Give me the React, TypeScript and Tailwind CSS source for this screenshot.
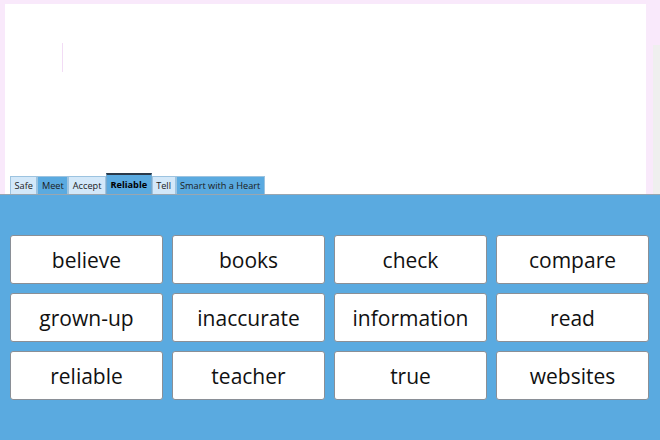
const tabs = [
  { label: "Safe", tone: "light" },
  { label: "Meet", tone: "blue" },
  { label: "Accept", tone: "light" },
  { label: "Reliable", tone: "active" },
  { label: "Tell", tone: "light" },
  { label: "Smart with a Heart", tone: "blue" },
];

const words = [
  "believe",
  "books",
  "check",
  "compare",
  "grown-up",
  "inaccurate",
  "information",
  "read",
  "reliable",
  "teacher",
  "true",
  "websites",
];

export default function App() {
  return (
    <div className="flex h-[440px] w-[660px] flex-col overflow-hidden bg-[#f9e9fb] font-['Open_Sans',sans-serif]">
      {/* Writing area */}
      <div className="flex h-[194px] shrink-0">
        <div className="flex flex-1 flex-col pl-[5px] pt-[4px]">
          <div className="relative flex flex-1 flex-col justify-end bg-white">
            <div className="absolute left-[57px] top-[39px] h-[29px] w-px bg-[#f2dcf5]" />
            <div className="flex items-end pl-[5px] text-[9.2px] leading-none text-[#1a1a1a]">
              {tabs.map((t) => (
                <div
                  key={t.label}
                  className={
                    t.tone === "active"
                      ? "flex h-[21px] items-center border-t-2 border-x border-[#2b3a4a] border-x-[#7aa9cc] bg-[#5aaae0] px-[3.5px] pt-px font-bold text-black"
                      : t.tone === "blue"
                        ? "flex h-[18px] items-center border border-b-0 border-[#9cc3e0] bg-[#5aaae0] px-[3.5px] pt-px"
                        : "flex h-[18px] items-center border border-b-0 border-[#9cc3e0] bg-[#d3e8f9] px-[3.5px] pt-px"
                  }
                >
                  {t.label}
                </div>
              ))}
            </div>
          </div>
        </div>
        <div className="w-[7px] bg-[#f9e9fb]" />
        <div className="flex w-[7px] flex-col">
          <div className="h-[45px] bg-[#f9e9fb]" />
          <div className="flex-1 bg-[#efefef]" />
        </div>
      </div>

      {/* Word bank */}
      <div className="flex-1 border-t border-[#9aa6b0] bg-[#5aaae0] pl-[10px] pr-[11px] pt-[40px]">
        <div className="grid grid-cols-4 gap-x-[9px] gap-y-[9px]">
          {words.map((w) => (
            <div
              key={w}
              className="flex h-[49px] items-center justify-center rounded-[3px] border border-[#8a8f96] bg-white pt-[2px] text-[21px] text-[#111]"
            >
              {w}
            </div>
          ))}
        </div>
      </div>
    </div>
  );
}
